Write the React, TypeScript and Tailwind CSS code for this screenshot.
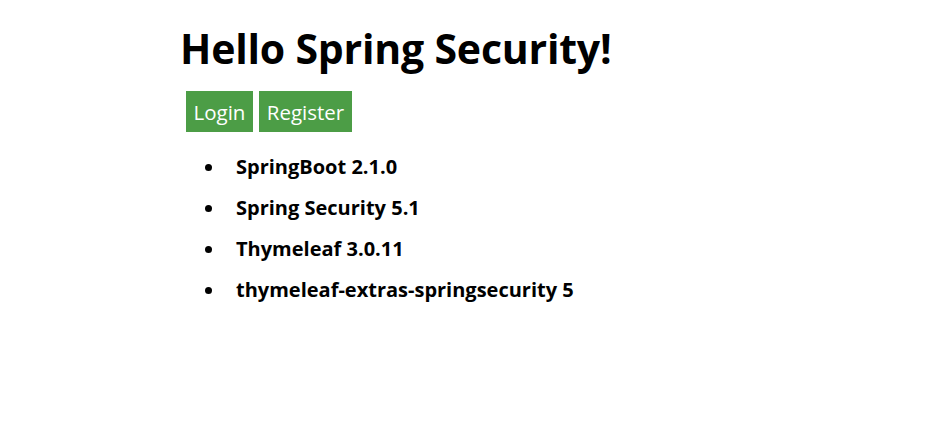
export default function App() {
  const items = [
    "SpringBoot 2.1.0",
    "Spring Security 5.1",
    "Thymeleaf 3.0.11",
    "thymeleaf-extras-springsecurity 5",
  ];
  return (
    <div className="w-[951px] h-[448px] bg-white text-black pl-[180px] pt-[21px]" style={{ fontFamily: '"Open Sans", "Noto Sans", sans-serif' }}>
      <h1 className="text-[41px] font-bold leading-[54px] tracking-[-0.2px]">Hello Spring Security!</h1>
      <div className="flex gap-[6px] ml-[6px] mt-[16px]">
        <button className="h-[41px] w-[67px] bg-[#4c9d46] text-white text-[20.5px] leading-none pt-[2px]">Login</button>
        <button className="h-[41px] w-[93px] bg-[#4c9d46] text-white text-[20.5px] leading-none pt-[2px]">Register</button>
      </div>
      <ul className="mt-[22px] ml-[25px]">
        {items.map((t) => (
          <li key={t} className="flex items-center h-[26px] mb-[15px]">
            <span className="w-[7px] h-[7px] rounded-full bg-black shrink-0" />
            <span className="ml-[24px] text-[20px] font-bold leading-[26px]">{t}</span>
          </li>
        ))}
      </ul>
    </div>
  );
}
